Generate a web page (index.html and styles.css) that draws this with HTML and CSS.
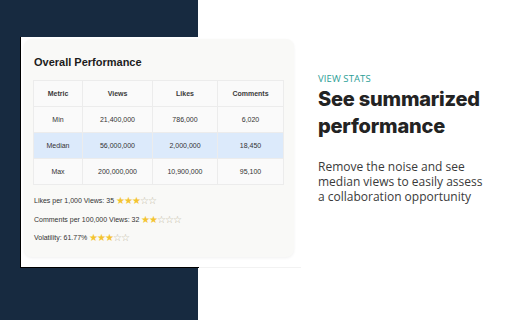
FILE: index.html
```html
<!DOCTYPE html>
<html lang="en">
<head>
  <meta charset="UTF-8" />
  <title>View Stats</title>
  <link rel="stylesheet" href="styles.css">
</head>
<body>
  <div class="slide">
    <!-- screenshot of the extension -->
    <div class="shot">
      <div class="card">
        <h3>Overall Performance</h3>
        <table class="perf">
          <tr><th>Metric</th><th>Views</th><th>Likes</th><th>Comments</th></tr>
          <tr><td>Min</td><td>21,400,000</td><td>786,000</td><td>6,020</td></tr>
          <tr class="median"><td>Median</td><td>56,000,000</td><td>2,000,000</td><td>18,450</td></tr>
          <tr><td>Max</td><td>200,000,000</td><td>10,900,000</td><td>95,100</td></tr>
        </table>
        <p class="stat">Likes per 1,000 Views: 35 <span class="stars"><b>★★★</b>☆☆</span></p>
        <p class="stat">Comments per 100,000 Views: 32 <span class="stars"><b>★★</b>☆☆☆</span></p>
        <p class="stat">Volatility: 61.77% <span class="stars"><b>★★★</b>☆☆</span></p>
      </div>
    </div>

    <div class="copy">
      <div class="eyebrow">VIEW STATS</div>
      <h1>See summarized performance</h1>
      <p>Remove the noise and see median views to easily assess a collaboration opportunity</p>
    </div>
  </div>
</body>
</html>
```

FILE: styles.css
```css
* { margin: 0; padding: 0; box-sizing: border-box; }
body {
  width: 512px;
  height: 320px;
  overflow: hidden;
  background: linear-gradient(to right, #172a40 198px, #ffffff 198px);
  font-family: 'Liberation Sans', Arial, sans-serif;
  color: #222;
}
.slide { display: flex; align-items: flex-start; }

.shot {
  margin: 37px 0 0 20px;
  width: 281px;
  height: 231px;
  background: #fff;
  border-style: solid;
  border-width: 0 0 1px 1px;
  border-image: linear-gradient(to right, #000 178px, #f2f2f2 178px) 1;
  padding: 2px 0 0 3px;
}
.card {
  width: 270px;
  height: 218px;
  background: #f9f9f7;
  border-radius: 8px;
  box-shadow: 0 1px 3px rgba(0,0,0,0.06);
  padding: 17px 10px 0 9px;
}
.card h3 {
  font-size: 11px;
  font-weight: bold;
  color: #1c1c1c;
  margin-left: 1px;
  line-height: 13px;
  margin-bottom: 11px;
}

.perf {
  width: 251px;
  border-collapse: collapse;
  font-size: 7px;
  color: #333;
  background: #fafafa;
}
.perf th, .perf td {
  border: 1px solid #ececec;
  height: 26px;
  text-align: center;
  font-weight: normal;
}
.perf th { font-weight: bold; color: #3a3a3a; }
.perf th:nth-child(1) { width: 49px; }
.perf th:nth-child(2) { width: 70px; }
.perf th:nth-child(3) { width: 65px; }
.perf .median td { background: #dceafb; }

.stat {
  font-size: 7px;
  color: #333;
  line-height: 10px;
  margin-top: 8.5px;
  margin-left: 1px;
}
.stat:first-of-type { margin-top: 11px; }
.stars { color: #bdb6a0; font-size: 9.5px; letter-spacing: -1px; vertical-align: -1px; }
.stars b { color: #f4c430; font-weight: normal; }

.copy {
  margin: 73px 0 0 17px;
  width: 180px;
}
.eyebrow {
  font-family: 'Open Sans', sans-serif;
  font-size: 9.5px;
  color: #2c9e96;
  line-height: 12px;
  letter-spacing: 0.1px;
}
.copy h1 {
  font-family: 'Inter', sans-serif;
  font-weight: 800;
  font-size: 20px;
  line-height: 27px;
  color: #232323;
  margin-top: 1px;
  letter-spacing: -0.2px;
}
.copy p {
  font-family: 'Open Sans', sans-serif;
  font-size: 12px;
  line-height: 15px;
  color: #3a3a3a;
  margin-top: 19px;
  width: 168px;
}
```
